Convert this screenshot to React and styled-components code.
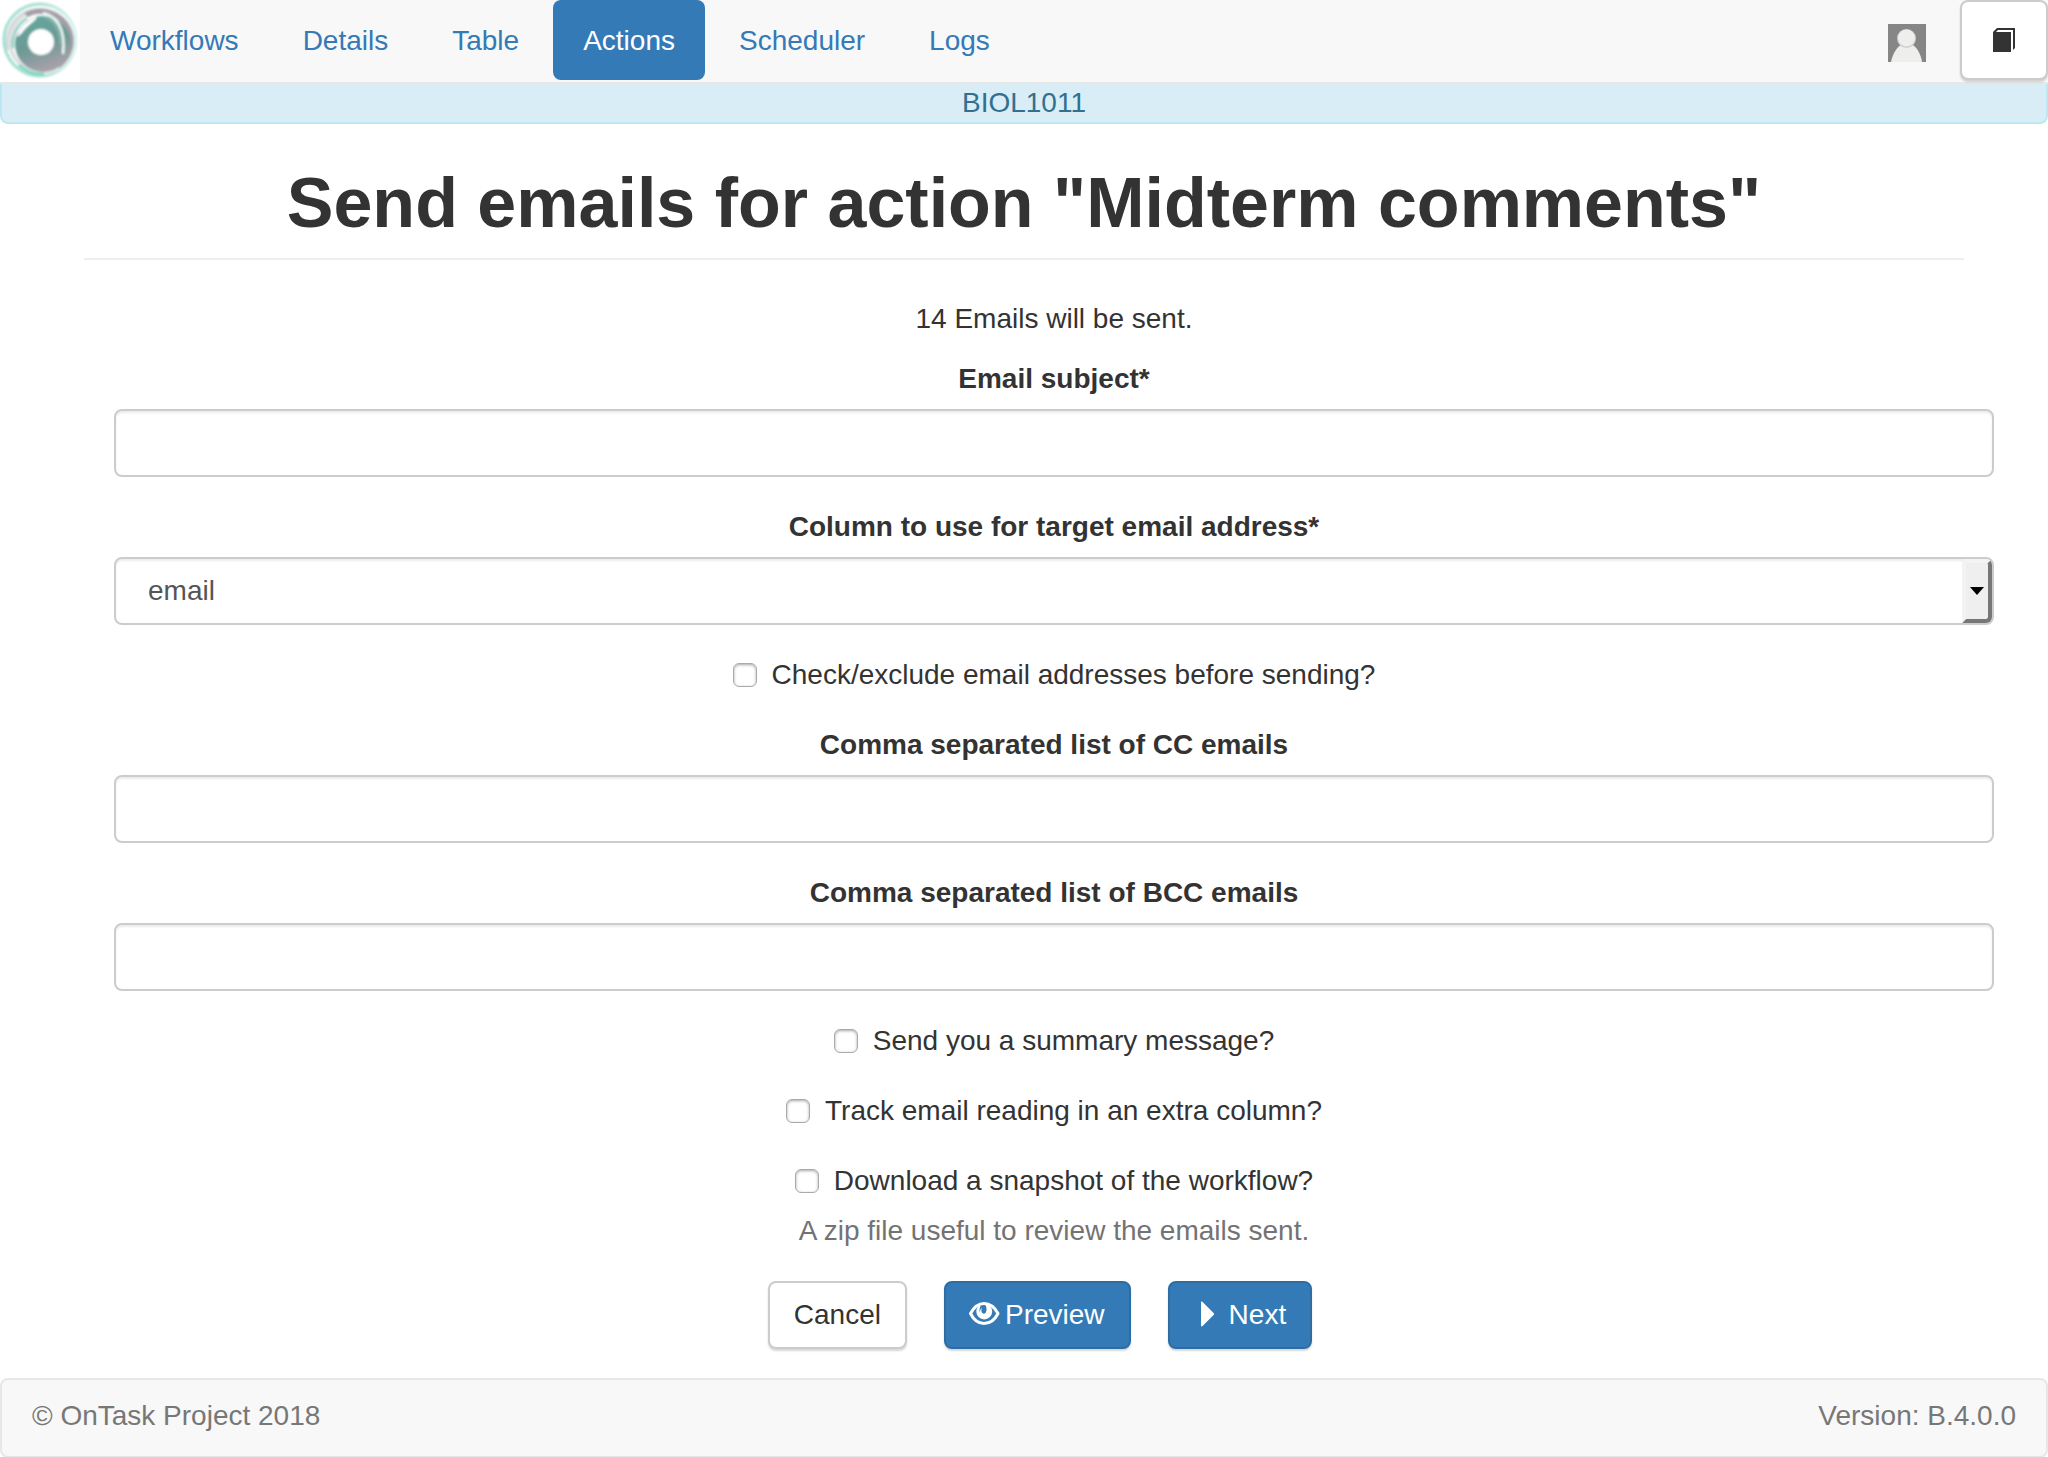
import React from "react";
import styled, { createGlobalStyle, css } from "styled-components";

const GlobalStyle = createGlobalStyle`
  *, *::before, *::after { box-sizing: border-box; }
  body {
    margin: 0;
    background: #fff;
    color: #333;
    font-family: "Liberation Sans", "Helvetica Neue", Helvetica, Arial, sans-serif;
    font-size: 28px;
    line-height: 40px;
  }
`;

const NavBar = styled.nav`
  display: flex;
  align-items: flex-start;
  height: 84px;
  background: #f8f8f8;
  border-bottom: 2px solid #e7e7e7;
`;

const Brand = styled.a`
  display: block;
  width: 80px;
  height: 82px;
  background: #fff;
`;

const NavList = styled.ul`
  display: flex;
  gap: 4px;
  flex: 1;
  margin: 0;
  padding: 0;
  list-style: none;
`;

const NavLink = styled.a`
  display: block;
  padding: 21px 30px 19px;
  border-radius: 8px;
  color: ${(p) => (p.$active ? "#fff" : "#337ab7")};
  background: ${(p) => (p.$active ? "#337ab7" : "transparent")};
  text-decoration: none;
`;

const ProfileLink = styled.a`
  display: block;
  height: 38px;
  margin: 24px 34px 0 0;
`;

const buttonBase = css`
  display: inline-flex;
  align-items: center;
  justify-content: center;
  border: 2px solid ${(p) => (p.$primary ? "#2e6da4" : "#ccc")};
  border-radius: 8px;
  background: ${(p) => (p.$primary ? "#337ab7" : "#fff")};
  color: ${(p) => (p.$primary ? "#fff" : "#333")};
  box-shadow: 0 2px 2px rgba(0, 0, 0, 0.16);
  font: inherit;
  cursor: pointer;
`;

const DocsButton = styled.button`
  ${buttonBase}
  width: 88px;
  height: 80px;
  padding: 0;
`;

const Button = styled.button`
  ${buttonBase}
  gap: 7px;
  padding: 12px 24px;
`;

const WorkflowBanner = styled.div`
  border: 2px solid #bce8f1;
  border-top: 0;
  border-radius: 0 0 8px 8px;
  background: #d9edf7;
  color: #31708f;
  line-height: 38px;
  text-align: center;
`;

const PageHeader = styled.header`
  margin: 40px 84px 39px;
  padding-bottom: 15px;
  border-bottom: 2px solid #eee;
  text-align: center;
`;

const Title = styled.h1`
  margin: 0;
  font-size: 70px;
  font-weight: 700;
  line-height: 79px;
`;

const Form = styled.form`
  display: flex;
  flex-direction: column;
  gap: 30px;
  margin: 0 54px 29px 114px;
  text-align: center;
`;

const Notice = styled.p`
  margin: 0 0 -10px;
`;

const Group = styled.div`
  display: flex;
  flex-direction: column;
  gap: 10px;
`;

const FieldLabel = styled.label`
  font-weight: 700;
`;

const control = css`
  display: block;
  width: 100%;
  height: 68px;
  padding: 12px 32px;
  border: 2px solid #ccc;
  border-radius: 8px;
  background: #fff;
  box-shadow: inset 0 2px 2px rgba(0, 0, 0, 0.075);
  color: #555;
  font: inherit;
`;

const TextInput = styled.input`
  ${control}
`;

const SelectWrap = styled.div`
  position: relative;
`;

const Select = styled.select`
  ${control}
  appearance: none;
`;

const SelectArrow = styled.span`
  position: absolute;
  top: 2px;
  right: 2px;
  bottom: 2px;
  width: 30px;
  display: flex;
  align-items: center;
  justify-content: center;
  border: 4px solid;
  border-color: #f3f3f3 #777 #777 #f3f3f3;
  border-radius: 0 6px 6px 0;
  background: #efefef;
  pointer-events: none;
`;

const CheckLabel = styled.label`
  display: flex;
  align-items: center;
  justify-content: center;
  gap: 15px;
`;

const CheckBox = styled.input`
  appearance: none;
  width: 24px;
  height: 24px;
  margin: 0;
  border: 1px solid #aaa;
  border-radius: 6px;
  background: #fff;
  box-shadow: inset 0 1px 3px rgba(0, 0, 0, 0.35);

  &:checked {
    background: #337ab7;
  }
`;

const Help = styled.span`
  color: #737373;
`;

const Actions = styled.div`
  display: flex;
  justify-content: center;
  gap: 37px;
  padding-right: 28px;
`;

const Footer = styled.footer`
  display: flex;
  justify-content: space-between;
  padding: 16px 30px 20px;
  border: 2px solid #e7e7e7;
  border-radius: 8px;
  background: #f8f8f8;
  color: #777;
`;

const Logo = () => (
  <svg width="80" height="80" viewBox="0 0 80 80" role="img" aria-label="OnTask">
    <defs>
      <linearGradient id="ring" x1="0" y1="0" x2="0.35" y2="1">
        <stop offset="0" stopColor="#5faa9f" />
        <stop offset="0.6" stopColor="#6d9a95" />
        <stop offset="1" stopColor="#a5a0aa" />
      </linearGradient>
      <linearGradient id="rim" x1="0" y1="0" x2="1" y2="0">
        <stop offset="0" stopColor="#9fdccf" />
        <stop offset="0.5" stopColor="#a8dfd3" />
        <stop offset="1" stopColor="#d8f2ec" />
      </linearGradient>
      <filter id="soft" x="-10%" y="-10%" width="120%" height="120%">
        <feGaussianBlur stdDeviation="0.9" />
      </filter>
    </defs>
    <g fill="none" filter="url(#soft)">
      <circle cx="40" cy="40" r="36" stroke="url(#rim)" strokeWidth="3" />
      <circle cx="41" cy="41" r="31" stroke="#dcdfe0" strokeWidth="4" />
      <path d="M8 50 A34 34 0 0 1 20 15 A34 34 0 0 1 60 16" stroke="#c2c9ca" strokeWidth="1.500" />
      <path d="M19 65 A33 33 0 0 0 44 74" stroke="#78d8c0" strokeWidth="3" />
      <path d="M26 15 A31 31 0 0 1 71 37 A31 31 0 0 1 58 66" stroke="#a49fa8" strokeWidth="5" />
      <circle cx="43" cy="44" r="28" fill="url(#ring)" />
      <path d="M13 48 A30 30 0 0 1 27 18" stroke="#74c8b5" strokeWidth="2" />
      <path d="M18 36 C20 29 26 22 36 18 C30 23 24 27 20 34" stroke="#fff" strokeWidth="2" />
      <path d="M43 13 C56 16 66 28 63 54" stroke="#eefaf7" strokeWidth="2.500" />
      <path d="M42 16 C53 19 60 28 60 44" stroke="#8ab9b0" strokeWidth="1.500" />
      <circle cx="41" cy="42" r="13" fill="#fff" />
    </g>
  </svg>
);

const Avatar = () => (
  <svg width="38" height="38" viewBox="0 0 38 38" role="img" aria-label="Profile">
    <rect width="38" height="38" fill="#868686" />
    <path d="M3 38C5 29 9 23 13 21H25C29 24 33 30 34 38Z" fill="#eeeeec" />
    <circle cx="18.500" cy="14.500" r="9.500" fill="#cfcfcf" />
    <circle cx="18.500" cy="14" r="8.500" fill="#eeeeec" />
  </svg>
);

const BookIcon = () => (
  <svg width="22" height="26" viewBox="0 0 22 26" aria-hidden="true">
    <path d="M0 5H18V25H0Z" fill="#333" />
    <path d="M0 5L4 1H22V21L20 23V3H5L3 5Z" fill="#333" />
  </svg>
);

const EyeIcon = () => (
  <svg width="28" height="28" viewBox="0 0 28 28" overflow="visible" aria-hidden="true">
    <path
      fill="none"
      stroke="#fff"
      strokeWidth="3"
      strokeLinejoin="round"
      d="M0.500 12.500C4 6 9 2.500 14 2.500S24.500 6 28 12.500C24.500 19.500 19 22.500 14 22.500S4 19.500 0.500 12.500Z"
    />
    <path
      fill="#fff"
      d="M8 5.500A8 8 0 1 0 20.500 5.500C18.500 4 16.500 3.500 15 3.500C17 6 17 10 15.500 12C14 13.500 12 12.500 11.500 10.500C11.300 9 11.500 7.500 12 6.500C10.500 7.500 10 9.500 10 11.500C9 9.500 9.500 6.500 11 4Z"
    />
  </svg>
);

const PlayIcon = () => (
  <svg width="28" height="28" viewBox="0 0 28 28" aria-hidden="true">
    <path
      d="M7 1.200C7 0.300 8 0.200 8.600 0.900L19.600 12C20.200 12.600 20.200 13.400 19.600 14L8.600 25.100C8 25.800 7 25.700 7 24.800Z"
      fill="#fff"
    />
  </svg>
);

const navItems = ["Workflows", "Details", "Table", "Actions", "Scheduler", "Logs"];

function TextField({ id, label }) {
  return (
    <Group>
      <FieldLabel htmlFor={id}>{label}</FieldLabel>
      <TextInput id={id} type="text" />
    </Group>
  );
}

function CheckField({ id, label, help }) {
  return (
    <Group>
      <CheckLabel htmlFor={id}>
        <CheckBox id={id} type="checkbox" />
        {label}
      </CheckLabel>
      {help && <Help>{help}</Help>}
    </Group>
  );
}

export default function App() {
  return (
    <>
      <GlobalStyle />
      <NavBar>
        <Brand href="#home">
          <Logo />
        </Brand>
        <NavList>
          {navItems.map((item) => (
            <li key={item}>
              <NavLink href={`#${item.toLowerCase()}`} $active={item === "Actions"}>
                {item}
              </NavLink>
            </li>
          ))}
        </NavList>
        <ProfileLink href="#profile">
          <Avatar />
        </ProfileLink>
        <DocsButton type="button" aria-label="Documentation">
          <BookIcon />
        </DocsButton>
      </NavBar>
      <WorkflowBanner>BIOL1011</WorkflowBanner>
      <main>
        <PageHeader>
          <Title>Send emails for action "Midterm comments"</Title>
        </PageHeader>
        <Form onSubmit={(e) => e.preventDefault()}>
          <Notice>14 Emails will be sent.</Notice>
          <TextField id="subject" label="Email subject*" />
          <Group>
            <FieldLabel htmlFor="column">Column to use for target email address*</FieldLabel>
            <SelectWrap>
              <Select id="column" defaultValue="email">
                <option value="email">email</option>
              </Select>
              <SelectArrow>
                <svg width="14" height="8" viewBox="0 0 14 8" aria-hidden="true">
                  <path d="M0 0H14L7 8Z" fill="#000" />
                </svg>
              </SelectArrow>
            </SelectWrap>
          </Group>
          <CheckField id="confirm" label="Check/exclude email addresses before sending?" />
          <TextField id="cc" label="Comma separated list of CC emails" />
          <TextField id="bcc" label="Comma separated list of BCC emails" />
          <CheckField id="summary" label="Send you a summary message?" />
          <CheckField id="track" label="Track email reading in an extra column?" />
          <CheckField
            id="snapshot"
            label="Download a snapshot of the workflow?"
            help="A zip file useful to review the emails sent."
          />
          <Actions>
            <Button type="button">Cancel</Button>
            <Button type="button" $primary>
              <EyeIcon />
              Preview
            </Button>
            <Button type="submit" $primary>
              <PlayIcon />
              Next
            </Button>
          </Actions>
        </Form>
      </main>
      <Footer>
        <span>© OnTask Project 2018</span>
        <span>Version: B.4.0.0</span>
      </Footer>
    </>
  );
}
